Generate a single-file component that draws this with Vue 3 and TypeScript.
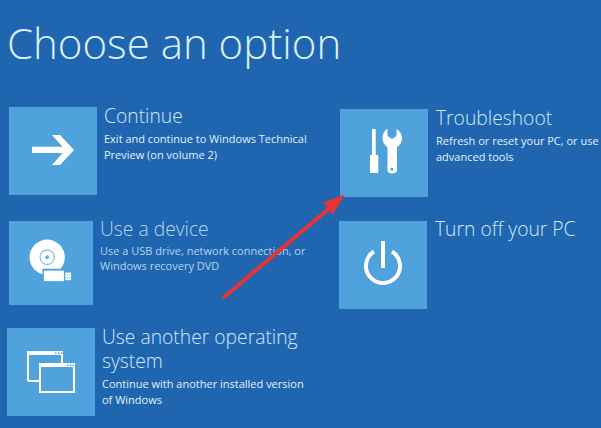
<script setup lang="ts">
interface Option {
  id: string
  title: string
  desc?: string
}

const leftOptions: Option[] = [
  { id: 'continue', title: 'Continue', desc: 'Exit and continue to Windows Technical Preview (on volume 2)' },
  { id: 'device', title: 'Use a device', desc: 'Use a USB drive, network connection, or Windows recovery DVD' },
  { id: 'other', title: 'Use another operating system', desc: 'Continue with another installed version of Windows' },
]

const rightOptions: Option[] = [
  { id: 'troubleshoot', title: 'Troubleshoot', desc: 'Refresh or reset your PC, or use advanced tools' },
  { id: 'off', title: 'Turn off your PC' },
]
</script>

<template>
  <div class="page">
    <h1 class="heading">Choose an option</h1>
    <div class="columns">
      <div v-for="(list, i) in [leftOptions, rightOptions]" :key="i" class="column" :class="i ? 'right' : 'left'">
        <div v-for="opt in list" :key="opt.id" class="option" :class="opt.id">
          <div class="tile">
            <svg class="icon" viewBox="0 0 88 88">
              <g v-if="opt.id === 'continue'" fill="#fff">
                <path d="M43 28h8l14 15-14 15h-8l10.500-12H23v-6.300h30.500z" />
              </g>
              <g v-else-if="opt.id === 'device'">
                <circle cx="40" cy="38" r="18.500" fill="#fff" />
                <circle cx="40" cy="38" r="7.500" fill="none" stroke="#7fbbe6" stroke-width="1.200" />
                <circle cx="40" cy="38" r="2" fill="#6fb0e0" />
                <rect x="35" y="50" width="24" height="14" fill="#4fa2dc" />
                <rect x="36.500" y="52" width="21" height="11" fill="#fff" />
                <rect x="59" y="54" width="6" height="8" fill="#fff" />
                <path d="M60.500 56h1.200v1.200h-1.200zM62.800 56H64v1.200h-1.200zM60.500 59h1.200v1.200h-1.200zM62.800 59H64v1.200h-1.200z" fill="#6fb0e0" />
              </g>
              <g v-else-if="opt.id === 'other'">
                <path d="M21 53V24h34v11" fill="none" stroke="#fff" stroke-width="2" />
                <path d="M21 53h11" fill="none" stroke="#fff" stroke-width="2" />
                <path d="M20 23h36v4H20z" fill="#fff" />
                <rect x="33" y="36" width="34" height="28" fill="#4fa2dc" stroke="#fff" stroke-width="2" />
                <path d="M32 35h36v4H32z" fill="#fff" />
                <path d="M48 24.500h1.500V26H48zM51 24.500h1.500V26H51zM54 24.500h1.500V26H54zM60 36.500h1.500V38H60zM63 36.500h1.500V38H63zM65.500 36.500H67V38h-1.500z" fill="#4fa2dc" />
              </g>
              <g v-else-if="opt.id === 'troubleshoot'" fill="#fff">
                <path d="M32 20h3.700v27H32zM30 46h8.300v18H30z" />
                <path d="M47.500 20v7l4.500 3 4.500-3v-7c3.500 2 5.500 5.500 5.500 9 0 4.500-2 7-5 9v23c0 2-2 3.500-5 3.500s-4.500-1.500-4.500-3.500V38c-3-2-5-4.500-5-9 0-3.500 1.500-7 4.500-9z" />
                <circle cx="51.800" cy="60" r="1.500" fill="#4fa2dc" />
              </g>
              <g v-else fill="none" stroke="#fff" stroke-width="4">
                <path d="M35 30.500a17 17 0 1 0 18 0" />
                <path d="M44 20v27" />
              </g>
            </svg>
          </div>
          <div class="info">
            <div class="title">{{ opt.title }}</div>
            <div v-if="opt.desc" class="desc">{{ opt.desc }}</div>
          </div>
        </div>
      </div>
    </div>
    <!-- red annotation arrow drawn over the screenshot -->
    <svg class="annotation" viewBox="0 0 601 428">
      <path d="M223 298L332 206" stroke="#e63338" stroke-width="4" fill="none" />
      <path d="M345 194.500L323 202.500L333 214.500z" fill="#e63338" />
    </svg>
  </div>
</template>

<style>
html, body { margin: 0; background: #2065b0; }
</style>

<style scoped>
.page {
  position: relative;
  width: 601px;
  height: 428px;
  overflow: hidden;
  background: #2065b0;
  font-family: "Open Sans", "Liberation Sans", sans-serif;
  color: #e2f2fb;
}
.heading {
  margin: 0;
  height: 107px;
  padding: 11px 0 0 7px;
  box-sizing: border-box;
  font-size: 42px;
  line-height: 64px;
  font-weight: 300;
  color: #d9f1fd;
}
.columns { display: flex; }
.column { display: flex; flex-direction: column; }
.left { width: 339px; }
.right { flex: 1; }
.option { display: flex; align-items: flex-start; }
.tile {
  flex: none;
  width: 88px;
  height: 88px;
  background: #4fa2dc;
}
.icon { display: block; width: 100%; height: 100%; }
.info { min-width: 0; }
.title {
  font-size: 19.300px;
  line-height: 26px;
  font-weight: 300;
  color: #cfe9f8;
}
.desc {
  font-size: 11px;
  line-height: 16px;
  color: #e2f2fb;
}

.continue { margin-left: 9px; }
.continue .info { margin-left: 7px; width: 210px; margin-top: -4px; }
.continue .title { margin-bottom: 2px; }

.device { margin-left: 9px; margin-top: 26px; }
.device .tile { width: 84px; height: 84px; }
.device .info { margin-left: 7px; width: 210px; margin-top: -5px; }
.device .title { margin-bottom: 1px; }
.device .title, .device .desc { color: #b4d6ef; }
.device .desc { line-height: 15px; }

.other { margin-left: 7px; margin-top: 23px; }
.other .info { margin-left: 7px; width: 210px; margin-top: -3px; }
.other .title { line-height: 24px; margin-bottom: 3px; }

.troubleshoot { margin-left: 1px; margin-top: 2px; }
.troubleshoot .info { margin-left: 8px; width: 165px; margin-top: -4px; }
.troubleshoot .title { margin-bottom: 2px; }

.off { margin-top: 24px; }
.off .info { margin-left: 8px; margin-top: -5px; }

.annotation {
  position: absolute;
  inset: 0;
  width: 601px;
  height: 428px;
  pointer-events: none;
}
</style>
